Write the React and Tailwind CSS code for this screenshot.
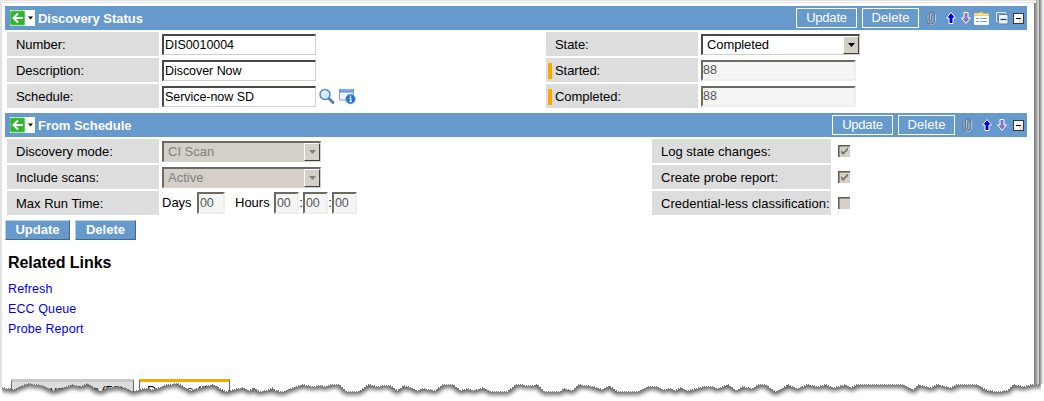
import React from "react";

const EDGE = [
  [2, 388], [13, 390], [22, 386], [28, 384], [43, 386], [53, 391], [63, 388], [72, 385], [80, 387], [87, 384], [100, 392], [107, 388], [117, 387], [125, 388], [133, 392],
  [143, 389], [153, 390], [167, 385], [178, 384], [190, 391], [203, 387], [213, 385], [225, 392], [233, 390], [243, 388], [249, 391], [253, 388], [259, 392],
  [266, 391], [272, 388], [275, 391], [283, 392], [290, 389], [302, 385], [312, 387], [321, 386], [325, 387], [331, 385], [339, 385], [346, 392], [358, 392],
  [368, 385], [377, 387], [383, 386], [390, 386], [397, 391], [403, 386], [410, 388], [417, 391], [422, 389], [435, 391], [442, 385], [453, 385], [460, 391],
  [467, 389], [473, 391], [483, 388], [490, 392], [507, 392], [515, 385], [532, 386], [537, 385], [544, 392], [560, 392], [563, 389], [572, 391], [578, 385],
  [593, 387], [602, 390], [609, 386], [617, 392], [637, 392], [647, 387], [657, 387], [662, 390], [670, 389], [675, 391], [680, 388], [687, 391], [703, 387],
  [712, 387], [717, 389], [728, 385], [736, 391], [742, 387], [752, 389], [758, 385], [765, 385], [775, 392], [782, 389], [787, 385], [797, 389], [807, 385],
  [817, 387], [825, 385], [833, 388], [845, 385], [850, 388], [857, 385], [903, 385], [913, 390], [918, 385], [930, 388], [937, 385], [950, 388], [957, 385],
  [977, 385], [987, 391], [998, 392], [1007, 391], [1013, 385], [1023, 387], [1032, 385], [1040, 385],
];

function edgePath() {
  let d = "M2 388";
  let k = 0;
  for (let x = 2; x <= 1040; x++) {
    while (k < EDGE.length - 2 && EDGE[k + 1][0] < x) k++;
    const [x0, y0] = EDGE[k];
    const [x1, y1] = EDGE[k + 1];
    const y = Math.round(y0 + ((y1 - y0) * (x - x0)) / (x1 - x0)) + (x % 2) - 1;
    d += `V${y}H${x + 1}`;
  }
  return d;
}

function TornEdge() {
  const d = edgePath();
  const below = `${d}V401H2Z`;
  return (
    <svg className="absolute bottom-0 left-0 pointer-events-none" width="1044" height="401" viewBox="0 0 1044 401">
      <defs>
        <clipPath id="below"><path d={below} /></clipPath>
        <filter id="soft" x="-5%" y="-50%" width="110%" height="300%"><feGaussianBlur stdDeviation="2" /></filter>
      </defs>
      <path d={`${d}H1044V401H0V388Z`} fill="#fff" />
      <g clipPath="url(#below)" opacity="0.7">
        <path d={d} fill="none" stroke="#111" strokeWidth="4" filter="url(#soft)" transform="translate(0 .5)" />
      </g>
    </svg>
  );
}

function BackButton() {
  return (
    <svg className="shrink-0" width="25" height="16" viewBox="0 0 25 16">
      <rect width="25" height="16" fill="#fff" />
      <rect x=".5" y="1" width="14" height="14" rx="1" fill="#2fb52f" />
      <rect x=".5" y="1" width="14" height="14" rx="1" fill="none" stroke="#5ccc50" />
      <path d="M13 8H4M8 3.5 3.5 8 8 12.5" fill="none" stroke="#fff" strokeWidth="2" />
      <path d="M18 6.500h5L20.500 9.500Z" fill="#000" />
    </svg>
  );
}

function Clip() {
  return (
    <svg width="10" height="14" viewBox="0 0 10 14" fill="none">
      <path d="M1 3v6c0 5.300 7.500 5.300 7.500 0V3.500c0-3.500-5-3.500-5 0V9c0 2 2.500 2 2.500 0V4" stroke="#dce8f2" strokeWidth="1" transform="translate(.7 .5)" />
      <path d="M1 3v6c0 5.300 7.500 5.300 7.500 0V3.500c0-3.500-5-3.500-5 0V9c0 2 2.500 2 2.500 0V4" stroke="#67747f" strokeWidth="1.1" />
    </svg>
  );
}

function Arrow({ down }) {
  return (
    <svg width="10" height="12" viewBox="0 0 10 12">
      <path
        d={down ? "M3 .5h4v5.500h2.500L5 11.500.500 6H3Z" : "M3 11.500h4V6h2.500L5 .500.500 6H3Z"}
        fill={down ? "#8478c4" : "#0000dd"}
        stroke="#fff"
      />
    </svg>
  );
}

function FormIcon() {
  return (
    <svg width="15" height="13" viewBox="0 0 15 13">
      <path d="M.5 2.500h14v10H.500Z" fill="#fff" stroke="#f3f7fb" />
      <path d="M0 4V1h4.500L5.500 0h3L9.500 1.500H15V4Z" fill="#f9c65a" />
      <path d="M1 2.500h13" stroke="#ffeeb8" />
      <path d="M2 6.500h3M6 6.500h7M2 9.500h3M6 9.500h7" stroke="#7e9ecb" />
    </svg>
  );
}

function StackIcon() {
  return (
    <svg width="13" height="13" viewBox="0 0 13 13" fill="none">
      <path d="M2.500 9.500h-2V.500h9v2" stroke="#dbe9f4" />
      <rect x="2.500" y="2.500" width="9.500" height="9.500" rx="1" fill="#eaf3fa" stroke="#587f9d" />
      <path d="M4.500 7.500h6" stroke="#173f58" strokeWidth="1.2" />
    </svg>
  );
}

function Collapse() {
  return (
    <svg width="11" height="11" viewBox="0 0 11 11">
      <rect x=".5" y=".5" width="10" height="10" fill="#fff" stroke="#33383f" />
      <rect x="6" y="6" width="4" height="4" fill="#e4e0d5" />
      <path d="M3 5.500h5" stroke="#000" />
    </svg>
  );
}

function Header({ title, full }) {
  return (
    <header className="ml-[5px] flex h-6 w-[1022px] items-center bg-[#6699cc] pl-[5px] pr-[3px] text-white">
      <BackButton />
      <h2 className="ml-[3px] pt-px text-[13px] leading-[23px] font-bold tracking-[-0.04px]">{title}</h2>
      <button className="ml-auto h-5 w-[61px] border border-white text-[13px] leading-[18px] tracking-[-0.2px]">Update</button>
      <button className="ml-[5px] h-5 w-[57px] border border-white text-[13px] leading-[18px] tracking-[0.05px]">Delete</button>
      <div className="ml-[7px] flex items-center">
        <Clip />
        <span className="ml-[10px]"><Arrow /></span>
        <span className="ml-[5px]"><Arrow down /></span>
        {full && <span className="ml-[3px]"><FormIcon /></span>}
        {full && <span className="ml-[7px]"><StackIcon /></span>}
        <span className={full ? "ml-[4px]" : "ml-[6px]"}><Collapse /></span>
      </div>
    </header>
  );
}

function Label({ children, width = "w-[152px]", mark }) {
  return (
    <div className={`flex h-6 shrink-0 items-center bg-[#dddddd] pt-px whitespace-nowrap ${width} ${mark ? "pl-[2px]" : "pl-[9px]"}`}>
      {mark && <i className="mr-[3px] h-4 w-1 bg-[#ffa500]" />}
      {children}
    </div>
  );
}

function Field({ value, disabled, label }) {
  return (
    <input
      aria-label={label}
      readOnly
      value={value}
      className={`ml-[3px] h-[21px] shrink-0 text-[12.500px] outline-none ${
        disabled
          ? "w-[155px] border-2 border-t-[#6b6b63] border-l-[#6b6b63] border-r-[#f0eeea] border-b-[#f0eeea] bg-[#f5f5f5] pl-0 text-[#555]"
          : "w-[154px] border border-t-2 border-l-2 border-t-[#484848] border-l-[#484848] border-r-[#d4d0c8] border-b-[#d4d0c8] bg-white pl-px text-black"
      }`}
    />
  );
}

function Select({ value, disabled }) {
  return (
    <div
      className={`ml-[3px] flex h-[21px] w-[159px] shrink-0 items-center border border-t-2 border-l-2 border-r-[#d4d0c8] border-b-[#d4d0c8] pl-[4px] ${
        disabled ? "border-t-[#6d6a66] border-l-[#6d6a66] bg-[#d4d0c8] text-[#808080]" : "border-t-[#484848] border-l-[#484848] bg-white text-black"
      }`}
    >
      <span className={disabled ? "" : "tracking-[-0.1px]"}>{value}</span>
      <span className="ml-auto flex h-[18px] w-4 items-center justify-center border border-t-white border-l-white border-r-[#404040] border-b-[#404040] bg-[#d4d0c8]">
        <svg width="7" height="4" viewBox="0 0 7 4"><path d="M0 0h7L3.500 4Z" fill={disabled ? "#808080" : "#000"} /></svg>
      </span>
    </div>
  );
}

function Check({ checked }) {
  return (
    <svg className="ml-[7px]" width="12" height="12" viewBox="0 0 12 12">
      <rect width="12" height="12" fill="#d4d0c8" />
      <path d="M0 12V0h12v1.500H1.500V12Z" fill="#5a5a56" />
      {checked && <path d="M3 5v2.500L5 10l5-5V2.500L5 7.300Z" fill="#77756f" />}
    </svg>
  );
}

function Num({ width = "w-[25px]" }) {
  return (
    <span className={`flex h-[22px] shrink-0 items-center border-2 border-t-[#6b6b63] border-l-[#6b6b63] border-r-[#f0eeea] border-b-[#f0eeea] bg-[#f5f5f5] pl-px text-[12.500px] tracking-[-0.2px] text-[#555] ${width}`}>
      00
    </span>
  );
}

function Colon() {
  return <span className="flex w-[4px] shrink-0 justify-center">:</span>;
}

function LookupIcons() {
  return (
    <span className="ml-[3px] flex items-center gap-[4px]">
      <svg width="16" height="17" viewBox="0 0 16 17">
        <path d="m10 10.500 4 4" stroke="#5a7fa8" strokeWidth="3" strokeLinecap="round" />
        <circle cx="6" cy="6.500" r="5" fill="#d3edff" stroke="#498bd0" strokeWidth="1.5" />
        <path d="M3 6.500a3 3 0 0 1 3-3" fill="none" stroke="#fff" strokeWidth="1.5" />
      </svg>
      <svg width="17" height="17" viewBox="0 0 17 17">
        <path d="M.5 1.500h14V12H.500Z" fill="#eef6fd" stroke="#76a4d6" />
        <path d="M0 1h15v3.500H0Z" fill="#5594d8" />
        <path d="M1 2h13" stroke="#a8cef4" />
        <circle cx="11.500" cy="11" r="4.700" fill="#2372cf" stroke="#5c9ee3" />
        <path d="M11.500 7.500v1.700M10.500 10.300h1.300v3M10.300 13.500h2.700" fill="none" stroke="#fff" strokeWidth="1.200" />
      </svg>
    </span>
  );
}

function FormRow({ left, right, leftWidth }) {
  return (
    <div className="flex h-6 pl-[7px]">
      <div className={`flex shrink-0 items-center ${leftWidth}`}>{left}</div>
      <div className="flex items-center">{right}</div>
    </div>
  );
}

export default function App() {
  return (
    <div className="relative flex h-[401px] w-[1044px] overflow-hidden bg-white font-['Liberation_Sans',Arial,sans-serif] text-[13px] text-black">
      <div className="h-[388px] w-[2px] shrink-0 bg-[#e2e2e2]" />
      <main className="w-[1032px] shrink-0 pt-[6px]">
        <div className="-ml-[2px]">
          <Header title="Discovery Status" full />
          <section className="mt-[2px] flex flex-col gap-[2px] tracking-[-0.05px]">
            <FormRow leftWidth="w-[539px]" left={<><Label>Number:</Label><Field label="Number" value="DIS0010004" /></>} right={<><Label>State:</Label><Select value="Completed" /></>} />
            <FormRow leftWidth="w-[539px]" left={<><Label>Description:</Label><Field label="Description" value="Discover Now" /></>} right={<><Label mark>Started:</Label><Field label="Started" disabled value="88" /></>} />
            <FormRow leftWidth="w-[539px]" left={<><Label>Schedule:</Label><Field label="Schedule" value="Service-now SD" /><LookupIcons /></>} right={<><Label mark>Completed:</Label><Field label="Completed" disabled value="88" /></>} />
          </section>
          <div className="h-[5px]" />
          <Header title="From Schedule" />
          <section className="mt-[2px] flex flex-col gap-[2px]">
            <FormRow leftWidth="w-[645px]" left={<><Label>Discovery mode:</Label><Select disabled value="CI Scan" /></>} right={<><Label width="w-[179px]">Log state changes:</Label><Check checked /></>} />
            <FormRow leftWidth="w-[645px]" left={<><Label>Include scans:</Label><Select disabled value="Active" /></>} right={<><Label width="w-[179px]">Create probe report:</Label><Check checked /></>} />
            <FormRow
              leftWidth="w-[645px]"
              left={
                <>
                  <Label>Max Run Time:</Label>
                  <span className="ml-[3px] w-[35px]">Days</span>
                  <Num width="w-[28px]" />
                  <span className="ml-[10px] w-[39px]">Hours</span>
                  <Num /><Colon /><Num /><Colon /><Num />
                </>
              }
              right={<><Label width="w-[179px]"><span className="tracking-[0.03px]">Credential-less classification:</span></Label><Check /></>}
            />
          </section>
          <div className="mt-[5px] ml-[5px] flex gap-[5px] font-bold text-white">
            <button className="h-5 w-[65px] border border-[#b9cde0] border-r-[#446688] border-b-[#446688] bg-[#6699cc] leading-[18px]">Update</button>
            <button className="h-5 w-[61px] border border-[#b9cde0] border-r-[#446688] border-b-[#446688] bg-[#6699cc] leading-[18px]">Delete</button>
          </div>
          <h3 className="mt-[13px] ml-2 text-[16px] leading-5 font-bold tracking-[-0.05px]">Related Links</h3>
          <nav className="mt-[6px] ml-2 flex flex-col text-[12.500px] leading-5 tracking-[0.1px] text-[#0000ee]">
            <a>Refresh</a>
            <a>ECC Queue</a>
            <a>Probe Report</a>
          </nav>
          <div className="mt-[40px] ml-[11px] flex gap-[5px] leading-[14px] whitespace-nowrap">
            <div className="h-[22px] w-[123px] border-x border-t-[3px] border-x-[#666] border-t-[#c8c8c8] bg-[#dddddd] pt-[2px] pl-[7px] tracking-[-0.25px]">Discovery Log (59)</div>
            <div className="h-[22px] w-[91px] border-x border-t-[3px] border-x-[#666] border-t-[#ffa500] bg-white pt-[2px] pl-[7px]">Devices (60)</div>
          </div>
        </div>
      </main>
      <div className="h-[388px] w-[10px] shrink-0 bg-[linear-gradient(90deg,#777_0,#888_1px,#999_2px,#b0b0b0_3px,#d0d0d0_4px,#e8e8e8_5px,#707070_5px,#8c8c8c_6px,#b4b4b4_7px,#dcdcdc_8px,#f6f6f6_10px)]" />
      <div className="absolute top-0 left-0 h-[3px] w-[1036px] border-y border-[#e2e2e2] bg-white" />
      <TornEdge />
    </div>
  );
}
